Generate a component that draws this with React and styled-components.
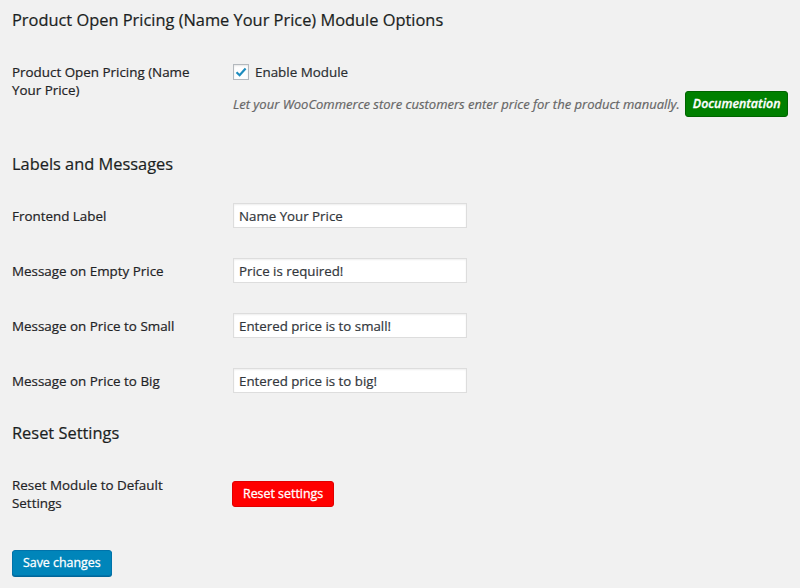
import React from "react";
import styled, { createGlobalStyle } from "styled-components";

const Global = createGlobalStyle`
  html, body {
    margin: 0;
    padding: 0;
    background: #f1f1f1;
  }
  body {
    font-family: "Open Sans", "Liberation Sans", sans-serif;
    color: #23282d;
    font-size: 13.3px;
    -webkit-text-stroke: 0.2px currentColor;
  }
`;

const Wrap = styled.div`
  width: 800px;
  height: 588px;
  padding: 0 12px;
  box-sizing: border-box;
  overflow: hidden;
`;

const Heading = styled.h2`
  margin: 0;
  height: ${(p) => p.h}px;
  padding-top: ${(p) => p.top}px;
  box-sizing: border-box;
  font-size: 16.4px;
  font-weight: 400;
  line-height: 24px;
  color: #1b1f22;
  white-space: nowrap;
`;

const Row = styled.div`
  display: flex;
  align-items: ${(p) => (p.center ? "center" : "flex-start")};
  height: ${(p) => p.h}px;
  padding-top: ${(p) => p.top || 0}px;
  box-sizing: border-box;
`;

const Label = styled.div`
  width: ${(p) => p.w || 221}px;
  margin-right: ${(p) => 221 - (p.w || 221)}px;
  flex: none;
  font-size: 13.4px;
  font-weight: 400;
  line-height: 18px;
  color: #1f2326;
  padding-right: 20px;
  box-sizing: border-box;
`;

const Field = styled.div`
  display: flex;
  flex-direction: column;
`;

const CheckLine = styled.label`
  display: flex;
  align-items: center;
  height: 18px;
  gap: 6px;
  font-size: 13.4px;
  line-height: 18px;
  color: #2a2e32;
`;

const Box = styled.span`
  width: 16px;
  height: 16px;
  box-sizing: border-box;
  border: 1px solid #b4b9be;
  background: #fff;
  box-shadow: inset 0 1px 2px rgba(0, 0, 0, 0.1);
  display: flex;
  align-items: center;
  justify-content: center;
`;

const DescLine = styled.div`
  display: flex;
  align-items: center;
  margin-top: 10px;
  gap: 5px;
  white-space: nowrap;
`;

const Desc = styled.span`
  font-style: italic;
  font-size: 13px;
  color: #666;
`;

const Button = styled.button`
  font-family: "Open Sans", "Liberation Sans", sans-serif;
  font-size: 12.4px;
  height: 26px;
  padding: 0 ${(p) => p.px || 10}px;
  border-radius: 3px;
  border: 1px solid ${(p) => p.border};
  background: ${(p) => p.bg};
  color: #fff;
  font-weight: ${(p) => p.weight || 400};
  font-style: ${(p) => (p.italic ? "italic" : "normal")};
  box-shadow: ${(p) => p.shadow || "none"};
  -webkit-text-stroke: 0.3px #fff;
  cursor: pointer;
  line-height: 24px;
  box-sizing: border-box;
  white-space: nowrap;
`;

const Input = styled.input`
  width: 234px;
  height: 25px;
  box-sizing: border-box;
  border: 1px solid #ddd;
  box-shadow: inset 0 1px 2px rgba(0, 0, 0, 0.07);
  background: #fff;
  padding: 0 5px;
  font-family: "Open Sans", "Liberation Sans", sans-serif;
  font-size: 13.3px;
  color: #32373c;
  outline: none;
`;

const messages = [
  ["Frontend Label", "Name Your Price"],
  ["Message on Empty Price", "Price is required!"],
  ["Message on Price to Small", "Entered price is to small!"],
  ["Message on Price to Big", "Entered price is to big!"],
];

export default function App() {
  return (
    <Wrap>
      <Global />
      <Heading h={32} top={8}>
        Product Open Pricing (Name Your Price) Module Options
      </Heading>
      <Row h={108} top={31}>
        <Label>Product Open Pricing (Name Your Price)</Label>
        <Field>
          <CheckLine>
            <Box>
              <svg width="12" height="12" viewBox="0 0 12 12">
                <path d="M1.5 6.2 L4.6 9.2 L10.6 2.4" fill="none" stroke="#1e8cbe" strokeWidth="2.2" />
              </svg>
            </Box>
            Enable Module
          </CheckLine>
          <DescLine>
            <Desc>Let your WooCommerce store customers enter price for the product manually.</Desc>
            <Button bg="#008000" border="#006400" weight={600} italic px={7}>
              Documentation
            </Button>
          </DescLine>
        </Field>
      </Row>
      <Heading h={48} top={12}>
        Labels and Messages
      </Heading>
      {messages.map(([label, value]) => (
        <Row key={label} h={55} center>
          <Label>{label}</Label>
          <Input defaultValue={value} />
        </Row>
      ))}
      <Heading h={50} top={13}>
        Reset Settings
      </Heading>
      <Row h={72} center>
        <Label w={180}>Reset Module to Default Settings</Label>
        <Button bg="#ff0000" border="#e00000" style={{ marginLeft: -1 }}>
          Reset settings
        </Button>
      </Row>
      <Row h={50} top={20}>
        <Button bg="#0085ba" border="#0073aa" shadow="0 1px 0 #006799">
          Save changes
        </Button>
      </Row>
    </Wrap>
  );
}
